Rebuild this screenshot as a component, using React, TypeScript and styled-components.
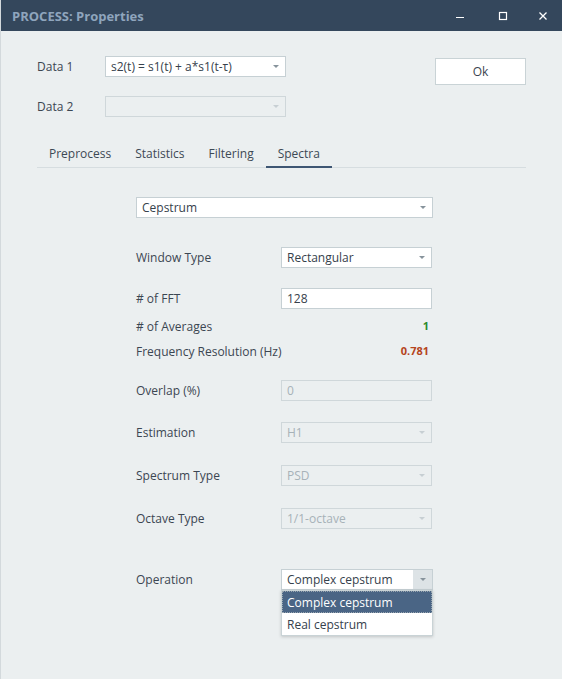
import * as React from 'react'
import styled, { createGlobalStyle } from 'styled-components'

// ______________________________________________________
//
// @ Global

const Global = createGlobalStyle`
  html, body {
    margin: 0;
    padding: 0;
    background: #ebeff0;
  }
  body {
    font-family: 'Open Sans', 'Noto Sans', sans-serif;
    font-size: 12px;
    color: #3b4a57;
  }
`

// ______________________________________________________
//
// @ Window chrome

const Window = styled.div`
  width: 562px;
  height: 679px;
  display: flex;
  flex-direction: column;
  background: #ebeff0;
  border-left: 1px solid #d3d9dc;
  box-sizing: border-box;
`

const TitleBar = styled.div`
  height: 31px;
  flex: none;
  display: flex;
  align-items: center;
  background: #34475c;
  padding-left: 11px;
`

const Title = styled.div`
  flex: 1;
  font-weight: 700;
  font-size: 13px;
  color: #8fa5bd;
`

const Controls = styled.div`
  display: flex;
  height: 100%;
`

const ControlButton = styled.div`
  width: 43px;
  height: 100%;
  display: flex;
  align-items: center;
  justify-content: center;
  &:last-child {
    width: 38px;
  }
`

const Body = styled.div`
  flex: 1;
  padding: 25px 36px 0 36px;
  display: flex;
  flex-direction: column;
`

// ______________________________________________________
//
// @ Top section

const Top = styled.div`
  display: flex;
`

const DataRows = styled.div`
  display: flex;
  flex-direction: column;
  gap: 19px;
`

const DataRow = styled.div`
  display: flex;
  align-items: center;
  height: 21px;
`

const DataLabel = styled.div`
  width: 68px;
  color: #3b4652;
`

const OkButton = styled.div`
  margin-left: auto;
  margin-top: 2px;
  width: 91px;
  height: 27px;
  box-sizing: border-box;
  border: 1px solid #c9d3d6;
  background: #fff;
  display: flex;
  align-items: center;
  justify-content: center;
  color: #3a4550;
`

// ______________________________________________________
//
// @ Tabs

const TabBar = styled.div`
  margin-top: 22px;
  display: flex;
  border-bottom: 1px solid #d6dde0;
  height: 29px;
  box-sizing: border-box;
`

const Tab = styled.div<{ active?: boolean }>`
  padding: 0 12px;
  display: flex;
  align-items: center;
  padding-top: 2px;
  color: #3d4955;
  border-bottom: 2px solid ${p => (p.active ? '#3e5673' : 'transparent')};
  margin-bottom: -1px;
  box-sizing: border-box;
`

// ______________________________________________________
//
// @ Form

const Form = styled.div`
  margin-left: 99px;
  width: 297px;
  display: flex;
  flex-direction: column;
`

const Row = styled.div<{ top: number }>`
  display: flex;
  align-items: center;
  height: 21px;
  margin-top: ${p => p.top}px;
  position: relative;
`

const Label = styled.div`
  width: 145px;
  flex: none;
  white-space: nowrap;
  color: #3b4652;
`

const Value = styled.div<{ color: string }>`
  margin-left: auto;
  margin-right: 4px;
  font-weight: 700;
  font-size: 11px;
  color: ${p => p.color};
  margin-top: -3px;
`

const Field = styled.div<{ width: number; disabled?: boolean }>`
  width: ${p => p.width}px;
  height: 21px;
  box-sizing: border-box;
  border: 1px solid ${p => (p.disabled ? '#cfd7da' : '#c6d0d4')};
  background: ${p => (p.disabled ? '#ebeff0' : '#fff')};
  color: ${p => (p.disabled ? '#a7b2b8' : '#36414c')};
  display: flex;
  align-items: center;
  padding-left: 5px;
  white-space: nowrap;
`

const FieldText = styled.span`
  flex: 1;
`

const Arrow = styled.div<{ open?: boolean; disabled?: boolean }>`
  width: 19px;
  align-self: stretch;
  display: flex;
  align-items: center;
  justify-content: center;
  background: ${p => (p.open ? '#dde3e6' : 'transparent')};
  &::after {
    content: '';
    border-left: 3px solid transparent;
    border-right: 3px solid transparent;
    border-top: 3px solid ${p => (p.disabled ? '#c7cfd3' : '#87939c')};
  }
`

const Menu = styled.div`
  position: absolute;
  top: 21px;
  left: 145px;
  width: 152px;
  background: #fff;
  border: 1px solid #c9d3d6;
  box-shadow: 0 1px 3px rgba(0, 0, 0, 0.18);
  box-sizing: border-box;
  z-index: 2;
`

const MenuItem = styled.div<{ selected?: boolean }>`
  height: 22px;
  display: flex;
  align-items: center;
  padding-left: 5px;
  background: ${p => (p.selected ? '#4a6585' : '#fff')};
  color: ${p => (p.selected ? '#fff' : '#36414c')};
  outline: ${p => (p.selected ? '1px dotted #9aa6b0' : 'none')};
  outline-offset: -1px;
`

// ______________________________________________________
//
// @ Pieces

type SelectProps = { width: number; text?: string; disabled?: boolean; open?: boolean }

const Select: React.FC<SelectProps> = ({ width, text, disabled, open }) => (
  <Field width={width} disabled={disabled}>
    <FieldText>{text}</FieldText>
    <Arrow open={open} disabled={disabled} />
  </Field>
)

const formRows: { top: number; label: string; text: string; kind: 'select' | 'input'; disabled?: boolean }[] = [
  { top: 18, label: 'Overlap (%)', text: '0', kind: 'input', disabled: true },
  { top: 21, label: 'Estimation', text: 'H1', kind: 'select', disabled: true },
  { top: 22, label: 'Spectrum Type', text: 'PSD', kind: 'select', disabled: true },
  { top: 22, label: 'Octave Type', text: '1/1-octave', kind: 'select', disabled: true },
]

// ______________________________________________________
//
// @ View

const App: React.FC = () => (
  <>
    <Global />
    <Window>
      <TitleBar>
        <Title>PROCESS: Properties</Title>
        <Controls>
          <ControlButton>
            <svg width="12" height="12" viewBox="0 0 12 12">
              <line x1="2" y1="7.5" x2="10" y2="7.5" stroke="#fff" strokeWidth="1" />
            </svg>
          </ControlButton>
          <ControlButton>
            <svg width="12" height="12" viewBox="0 0 12 12">
              <rect x="2.5" y="2.5" width="7" height="7" fill="none" stroke="#fff" strokeWidth="1.2" />
            </svg>
          </ControlButton>
          <ControlButton>
            <svg width="12" height="12" viewBox="0 0 12 12">
              <path d="M2.5 2.5 L9.5 9.5 M9.5 2.5 L2.5 9.5" stroke="#fff" strokeWidth="1.3" />
            </svg>
          </ControlButton>
        </Controls>
      </TitleBar>
      <Body>
        <Top>
          <DataRows>
            <DataRow>
              <DataLabel>Data 1</DataLabel>
              <Select width={181} text="s2(t) = s1(t) + a*s1(t-τ)" />
            </DataRow>
            <DataRow>
              <DataLabel>Data 2</DataLabel>
              <Select width={181} disabled />
            </DataRow>
          </DataRows>
          <OkButton>Ok</OkButton>
        </Top>
        <TabBar>
          <Tab>Preprocess</Tab>
          <Tab>Statistics</Tab>
          <Tab>Filtering</Tab>
          <Tab active>Spectra</Tab>
        </TabBar>
        <Form>
          <Row top={29}>
            <Select width={297} text="Cepstrum" />
          </Row>
          <Row top={29}>
            <Label>Window Type</Label>
            <Select width={151} text="Rectangular" />
          </Row>
          <Row top={20}>
            <Label># of FFT</Label>
            <Field width={151}>128</Field>
          </Row>
          <Row top={7}>
            <Label># of Averages</Label>
            <Value color="#2d8a2d">1</Value>
          </Row>
          <Row top={4}>
            <Label>Frequency Resolution (Hz)</Label>
            <Value color="#b5441c">0.781</Value>
          </Row>
          {formRows.map(r => (
            <Row key={r.label} top={r.top}>
              <Label>{r.label}</Label>
              {r.kind === 'select' ? (
                <Select width={151} text={r.text} disabled={r.disabled} />
              ) : (
                <Field width={151} disabled={r.disabled}>{r.text}</Field>
              )}
            </Row>
          ))}
          <Row top={40}>
            <Label>Operation</Label>
            <Select width={152} text="Complex cepstrum" open />
            <Menu>
              <MenuItem selected>Complex cepstrum</MenuItem>
              <MenuItem>Real cepstrum</MenuItem>
            </Menu>
          </Row>
        </Form>
      </Body>
    </Window>
  </>
)

export default App
